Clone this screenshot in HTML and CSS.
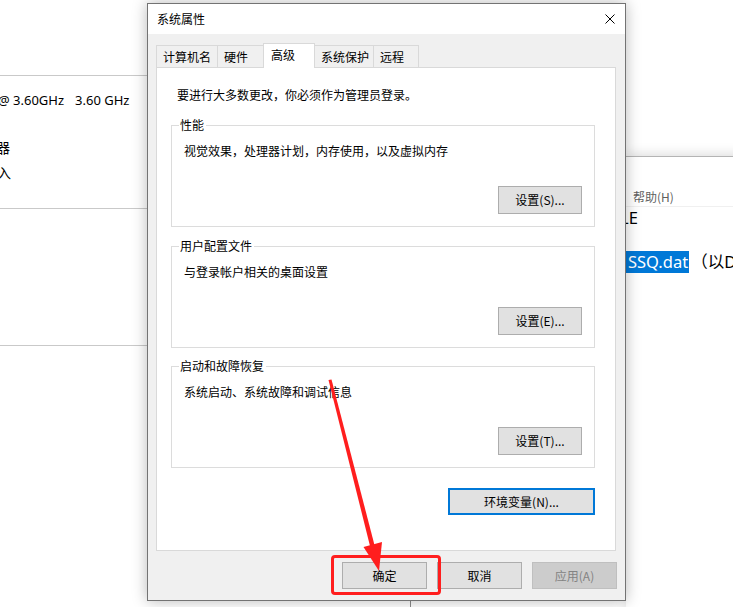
FILE: index.html
```html
<!DOCTYPE html>
<html lang="zh-CN">
<head>
  <meta charset="UTF-8" />
  <title>系统属性</title>
  <link rel="stylesheet" href="styles.css">
</head>
<body>
  <div class="desktop">

    <!-- window behind, left -->
    <div class="back-left">
      <div class="bl-row bl-top"></div>
      <div class="bl-row bl-cpu">
        <div class="cpu-line"><span class="cpu-a">@ 3.60GHz</span><span class="cpu-b">3.60 GHz</span></div>
        <div class="cut-char cut-1">器</div>
        <div class="cut-char cut-2">入</div>
      </div>
      <div class="bl-row bl-mid"></div>
      <div class="bl-row bl-end"></div>
    </div>

    <!-- notepad, right -->
    <div class="notepad">
      <div class="np-title"></div>
      <div class="np-menu"><span>帮助(H)</span></div>
      <div class="np-edit">
        <div class="np-line"><span class="np-cut">LE</span></div>
        <div class="np-line"></div>
        <div class="np-line"><span class="sel">SSQ.dat</span><span>（以D:</span></div>
      </div>
    </div>

    <div class="back-bottom"></div>

    <!-- dialog -->
    <div class="dialog">
      <div class="titlebar">
        <span class="title">系统属性</span>
        <svg class="close" width="10" height="10" viewBox="0 0 10 10">
          <path d="M0.5 0.5 L9.5 9.5 M9.5 0.5 L0.5 9.5" stroke="#000" stroke-width="1" fill="none"/>
        </svg>
      </div>

      <div class="dlg-body">
        <div class="tabs">
          <div class="tab" style="width:62px">计算机名</div>
          <div class="tab" style="width:47px">硬件</div>
          <div class="tab active" style="width:52px">高级</div>
          <div class="tab" style="width:60px">系统保护</div>
          <div class="tab" style="width:46px">远程</div>
        </div>

        <div class="panel">
          <div class="intro">要进行大多数更改，你必须作为管理员登录。</div>

          <div class="group">
            <div class="group-title">性能</div>
            <div class="group-desc">视觉效果，处理器计划，内存使用，以及虚拟内存</div>
            <button class="btn group-btn">设置(S)...</button>
          </div>

          <div class="group group-2">
            <div class="group-title">用户配置文件</div>
            <div class="group-desc">与登录帐户相关的桌面设置</div>
            <button class="btn group-btn">设置(E)...</button>
          </div>

          <div class="group group-3">
            <div class="group-title">启动和故障恢复</div>
            <div class="group-desc">系统启动、系统故障和调试信息</div>
            <button class="btn group-btn">设置(T)...</button>
          </div>

          <button class="btn env-btn">环境变量(N)...</button>
        </div>

        <div class="footer">
          <button class="btn foot-btn">确定</button>
          <button class="btn foot-btn">取消</button>
          <button class="btn foot-btn disabled">应用(A)</button>
        </div>
      </div>
    </div>

    <!-- red annotation -->
    <div class="mark-box"></div>
    <svg class="mark-arrow" width="733" height="607" viewBox="0 0 733 607">
      <polygon points="328.5,380 331.5,379.5 375,547 370.5,548" fill="#ff1e1e"/>
      <polygon points="379,571 382,542 363.5,547" fill="#ff1e1e"/>
    </svg>
  </div>
</body>
</html>
```

FILE: styles.css
```css
* {
  box-sizing: border-box;
  margin: 0;
  padding: 0;
}

body {
  background: #fff;
  font-family: "Noto Sans CJK SC", "Noto Sans", sans-serif;
  font-size: 12px;
  color: #000;
  overflow: hidden;
}

.desktop {
  position: relative;
  width: 733px;
  height: 607px;
  overflow: hidden;
  background: #fff;
}

/* left window behind */
.back-left {
  position: absolute;
  left: 0;
  top: 0;
  width: 147px;
  height: 607px;
  overflow: hidden;
}

.bl-top {
  height: 75px;
}

.bl-cpu {
  height: 133px;
  border-top: 1px solid #c9c9c9;
  padding-top: 15px;
  font-family: "Noto Sans", "Noto Sans CJK SC", sans-serif;
  font-size: 13px;
}

.cpu-line {
  display: flex;
  line-height: 18px;
  margin-left: -2px;
}

.cpu-b {
  margin-left: 11px;
}

.cut-char {
  font-family: "Noto Sans CJK SC", sans-serif;
  font-size: 14px;
  line-height: 18px;
}

.cut-1 {
  margin-top: 29px;
  margin-left: -4px;
}

.cut-2 {
  margin-top: 7px;
  margin-left: -3px;
}

.bl-mid {
  height: 137px;
  border-top: 1px solid #c9c9c9;
}

.bl-end {
  border-top: 1px solid #c9c9c9;
}

/* notepad on the right */
.notepad {
  position: absolute;
  left: 626px;
  top: 156px;
  width: 300px;
  height: 460px;
  background: #fff;
  border-top: 1px solid #b4b4b4;
  box-shadow: 0 -3px 10px rgba(0, 0, 0, 0.12);
  overflow: hidden;
}

.np-title {
  height: 30px;
}

.np-menu {
  height: 20px;
  line-height: 20px;
  padding-left: 7px;
  color: #5f5f5f;
  border-bottom: 1px solid #f0f0f0;
}

.np-edit {
  font-family: "Noto Sans", "Noto Sans CJK SC", sans-serif;
  font-size: 16.5px;
}

.np-line {
  height: 22px;
  line-height: 22px;
  white-space: nowrap;
  display: flex;
}

.np-cut {
  margin-left: -6px;
}

.sel {
  background: #0078d7;
  color: #fff;
  padding: 0 1px 0 2px;
  margin-right: 2px;
}

.back-bottom {
  position: absolute;
  left: 410px;
  top: 590px;
  width: 200px;
  height: 30px;
  border-left: 1px solid #8c8c8c;
}

/* dialog */
.dialog {
  position: absolute;
  left: 147px;
  top: 3px;
  width: 479px;
  height: 598px;
  border: 1px solid #737373;
  background: #f0f0f0;
  box-shadow: 0 0 14px rgba(0, 0, 0, 0.28);
  display: flex;
  flex-direction: column;
}

.titlebar {
  height: 30px;
  background: #fff;
  display: flex;
  align-items: center;
  justify-content: space-between;
  padding: 0 10px 0 9px;
}

.title {
  line-height: 16px;
}

.close {
  display: block;
}

.dlg-body {
  flex: 1;
  padding: 9px 8px 0 8px;
  display: flex;
  flex-direction: column;
}

.tabs {
  display: flex;
  align-items: flex-end;
  height: 24px;
  position: relative;
  z-index: 2;
}

.tab {
  height: 22px;
  line-height: 21px;
  padding-left: 6px;
  background: #f0f0f0;
  border: 1px solid #d9d9d9;
  border-bottom: none;
  margin-right: -1px;
  white-space: nowrap;
}

.tab.active {
  height: 25px;
  line-height: 21px;
  background: #fff;
  padding-left: 7px;
  margin-bottom: -1px;
  position: relative;
}

.panel {
  height: 484px;
  width: 460px;
  background: #fff;
  border: 1px solid #d9d9d9;
  padding: 19px 20px 0 14px;
  display: flex;
  flex-direction: column;
}

.intro {
  line-height: 16px;
  margin-left: 6px;
}

.group {
  height: 102px;
  border: 1px solid #dcdcdc;
  margin-top: 22px;
  display: flex;
  flex-direction: column;
}

.group-2 {
  margin-top: 19px;
}

.group-3 {
  margin-top: 18px;
}

.group-title {
  align-self: flex-start;
  margin: -9px 0 0 7px;
  padding: 0 2px 0 1px;
  background: #fff;
  line-height: 16px;
}

.group-desc {
  margin: 10px 0 0 12px;
  line-height: 16px;
}

.btn {
  font-family: "Noto Sans CJK SC", "Noto Sans", sans-serif;
  font-size: 12px;
  color: #000;
  background: #e1e1e1;
  border: 1px solid #adadad;
  height: 28px;
  line-height: 16px;
}

.group-btn {
  width: 84px;
  align-self: flex-end;
  margin: 27px 12px 0 0;
}

.env-btn {
  width: 147px;
  height: 27px;
  align-self: flex-end;
  margin-top: 20px;
  border: 2px solid #0078d7;
}

.footer {
  display: flex;
  justify-content: flex-end;
  gap: 10px;
  padding: 11px 0 0 0;
}

.foot-btn {
  width: 85px;
  height: 27px;
}

.foot-btn.disabled {
  background: #cccccc;
  border-color: #bfbfbf;
  color: #838383;
}

/* annotation */
.mark-box {
  position: absolute;
  left: 331px;
  top: 555px;
  width: 110px;
  height: 40px;
  border: 3px solid #ff1e1e;
  border-radius: 4px;
}

.mark-arrow {
  position: absolute;
  left: 0;
  top: 0;
  pointer-events: none;
}
```
